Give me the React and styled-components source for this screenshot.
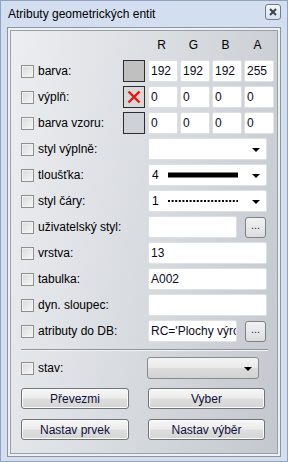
import React from 'react';
import styled, { createGlobalStyle } from 'styled-components';

const GlobalStyle = createGlobalStyle`
  body {
    margin: 0;
    font-family: "Liberation Sans", Arial, sans-serif;
    font-size: 12px;
    color: #000;
  }
`;

const Window = styled.div`
  width: 288px;
  height: 462px;
  box-sizing: border-box;
  display: flex;
  flex-direction: column;
  background: #d3dff0;
  border: 1px solid #8fa3bf;
  padding: 0 6px 4px 6px;
`;

const TitleBar = styled.div`
  height: 26px;
  display: flex;
  align-items: center;
  justify-content: space-between;
  padding: 0 0 0 1px;
  font-size: 12px;
  color: #000;
`;

const CloseButton = styled.div`
  width: 16px;
  height: 16px;
  box-sizing: border-box;
  margin-right: 0px;
  margin-top: -4px;
  border: 1px solid #6f7d90;
  border-radius: 3px;
  background: linear-gradient(#f4f7fb, #d9e2ee);
  display: flex;
  align-items: center;
  justify-content: center;
`;

const Panel = styled.div`
  flex: 1;
  display: flex;
  border: 1px solid #8e959e;
  padding: 2px;
  background: #eef1f4;
`;

const Inner = styled.div`
  flex: 1;
  display: flex;
  flex-direction: column;
  border: 1px solid #9aa0a8;
  padding: 3px 0 0 10px;
  background: linear-gradient(100deg, #eceef1 0%, #d6d9de 55%, #c4c8ce 100%);
`;

const HeaderRow = styled.div`
  height: 22px;
  display: flex;
  align-items: center;
  margin-bottom: 4px;
  padding-left: 127px;
  gap: 2px;
`;

const HeaderCell = styled.div`
  width: 30px;
  text-align: center;
  padding-right: 3px;
  box-sizing: border-box;
`;

const Rows = styled.div`
  display: flex;
  flex-direction: column;
  gap: 4px;
`;

const Row = styled.div`
  height: 22px;
  display: flex;
  align-items: center;
`;

const LabelCell = styled.label`
  width: 102px;
  display: flex;
  align-items: center;
  gap: 4px;
  white-space: nowrap;
`;

const Check = styled.span`
  width: 13px;
  height: 13px;
  box-sizing: border-box;
  border: 1px solid #8e8f8f;
  background: linear-gradient(135deg, #d8d9db, #f7f7f7);
  box-shadow: inset 0 0 0 1px #f2f2f2;
  flex: none;
`;

const Swatch = styled.div`
  width: 22px;
  height: 22px;
  box-sizing: border-box;
  margin-right: 3px;
  flex: none;
  background: ${(p) => p.$bg || 'transparent'};
  border: ${(p) => (p.$bordered ? '1px solid #2d2d2d' : 'none')};
  display: flex;
  align-items: center;
  justify-content: center;
`;

const Fields = styled.div`
  display: flex;
  gap: ${(p) => p.$gap || 2}px;
  align-items: center;
`;

const Field = styled.div`
  width: ${(p) => p.$w}px;
  height: 22px;
  box-sizing: border-box;
  border: 1px solid #dde1e6;
  border-radius: 2px;
  background: #fff;
  padding-left: 2px;
  line-height: 20px;
  white-space: nowrap;
  overflow: hidden;
  color: #0a0a1e;
`;

const Combo = styled.div`
  width: ${(p) => p.$w}px;
  height: 22px;
  box-sizing: border-box;
  border: 1px solid #dde1e6;
  border-radius: 2px;
  background: #fff;
  padding: 0 6px 0 3px;
  display: flex;
  align-items: center;
  gap: 4px;
`;

const ComboValue = styled.div`
  flex: 1;
  display: flex;
  align-items: center;
  gap: 9px;
`;

const Arrow = styled.span`
  width: 0;
  height: 0;
  border-left: 4px solid transparent;
  border-right: 4px solid transparent;
  border-top: 4px solid #000;
  margin-top: 2px;
`;

const DotsButton = styled.div`
  width: 21px;
  height: 21px;
  box-sizing: border-box;
  border: 1px solid #7d8289;
  border-radius: 3px;
  background: linear-gradient(#f3f3f3, #dcdcdc);
  display: flex;
  align-items: center;
  justify-content: center;
  font-size: 11px;
  line-height: 1;
  color: #1a1a6a;
  padding-bottom: 3px;
`;

const Separator = styled.div`
  height: 1px;
  width: 247px;
  margin: 7px 0 7px 0;
  background: #8c939c;
  box-shadow: 0 1px 0 #f2f4f6;
`;

const StavCombo = styled.div`
  width: 112px;
  height: 22px;
  box-sizing: border-box;
  margin-left: 24px;
  border: 1px solid #878b91;
  border-radius: 3px;
  background: linear-gradient(#f4f4f4 0%, #e9e9e9 48%, #dcdcdc 52%, #d2d2d2 100%);
  display: flex;
  align-items: center;
  justify-content: flex-end;
  padding-right: 6px;
`;

const ButtonGrid = styled.div`
  display: grid;
  grid-template-columns: 108px 117px;
  column-gap: 19px;
  row-gap: 10px;
  margin-top: 9px;
`;

const Button = styled.div`
  height: 21px;
  box-sizing: border-box;
  border: 1px solid #70747a;
  border-radius: 3px;
  background: linear-gradient(#f6f6f6 0%, #ececec 48%, #dedede 52%, #d4d4d4 100%);
  box-shadow: inset 0 0 0 1px #fbfbfb;
  display: flex;
  align-items: center;
  justify-content: center;
  color: #10103a;
  font-size: 12px;
`;

const CloseIcon = () => (
  <svg width="8" height="8" viewBox="0 0 8 8">
    <path d="M1 1 L7 7 M7 1 L1 7" stroke="#3a4150" strokeWidth="2" />
  </svg>
);

const RedX = () => (
  <svg width="14" height="14" viewBox="0 0 14 14">
    <path d="M1.5 1.5 L12.5 12.5 M12.5 1.5 L1.5 12.5" stroke="#f01010" strokeWidth="2.4" />
  </svg>
);

const ThickLine = () => (
  <svg width="70" height="6" viewBox="0 0 70 6">
    <rect x="0" y="0.5" width="70" height="5" fill="#000" />
  </svg>
);

const DottedLine = () => (
  <svg width="70" height="4" viewBox="0 0 70 4">
    <line x1="0" y1="2" x2="70" y2="2" stroke="#000" strokeWidth="2" strokeDasharray="2 1.6" />
  </svg>
);

const Label = ({ children }) => (
  <LabelCell>
    <Check />
    {children}
  </LabelCell>
);

const rgbaRows = [
  { label: 'barva:', values: ['192', '192', '192', '255'], swatch: { $bg: '#c0c0c0', $bordered: true } },
  { label: 'výplň:', values: ['0', '0', '0', '0'], swatch: { $bg: '#d8d8d8', $bordered: true }, cross: true },
  { label: 'barva vzoru:', values: ['0', '0', '0', '0'], swatch: { $bg: '#ced2d8', $bordered: true } },
];

const App = () => {
  return (
    <>
      <GlobalStyle />
      <Window>
        <TitleBar>
          <span>Atributy geometrických entit</span>
          <CloseButton>
            <CloseIcon />
          </CloseButton>
        </TitleBar>
        <Panel>
          <Inner>
            <HeaderRow>
              {['R', 'G', 'B', 'A'].map((c) => (
                <HeaderCell key={c}>{c}</HeaderCell>
              ))}
            </HeaderRow>
            <Rows>
              {rgbaRows.map((r) => (
                <Row key={r.label}>
                  <Label>{r.label}</Label>
                  <Swatch {...r.swatch}>{r.cross && <RedX />}</Swatch>
                  <Fields>
                    {r.values.map((v, i) => (
                      <Field key={i} $w={30}>{v}</Field>
                    ))}
                  </Fields>
                </Row>
              ))}
              <Row>
                <Label>styl výplně:</Label>
                <Swatch $bg="#dcdfe3" />
                <Combo $w={119}>
                  <ComboValue />
                  <Arrow />
                </Combo>
              </Row>
              <Row>
                <Label>tloušťka:</Label>
                <Swatch />
                <Combo $w={119}>
                  <ComboValue>
                    4 <ThickLine />
                  </ComboValue>
                  <Arrow />
                </Combo>
              </Row>
              <Row>
                <Label>styl čáry:</Label>
                <Swatch />
                <Combo $w={119}>
                  <ComboValue>
                    1 <DottedLine />
                  </ComboValue>
                  <Arrow />
                </Combo>
              </Row>
              <Row>
                <Label>uživatelský styl:</Label>
                <Swatch />
                <Fields $gap={8}>
                  <Field $w={89} />
                  <DotsButton>...</DotsButton>
                </Fields>
              </Row>
              <Row>
                <Label>vrstva:</Label>
                <Swatch />
                <Field $w={119}>13</Field>
              </Row>
              <Row>
                <Label>tabulka:</Label>
                <Swatch />
                <Field $w={119}>A002</Field>
              </Row>
              <Row>
                <Label>dyn. sloupec:</Label>
                <Swatch />
                <Field $w={119} />
              </Row>
              <Row>
                <Label>atributy do DB:</Label>
                <Swatch />
                <Fields $gap={8}>
                  <Field $w={89}>RC='Plochy výrobků'</Field>
                  <DotsButton>...</DotsButton>
                </Fields>
              </Row>
            </Rows>
            <Separator />
            <Row>
              <Label>stav:</Label>
              <StavCombo>
                <Arrow />
              </StavCombo>
            </Row>
            <ButtonGrid>
              <Button>Převezmi</Button>
              <Button>Vyber</Button>
              <Button>Nastav prvek</Button>
              <Button>Nastav výběr</Button>
            </ButtonGrid>
          </Inner>
        </Panel>
      </Window>
    </>
  );
};

export default App;
